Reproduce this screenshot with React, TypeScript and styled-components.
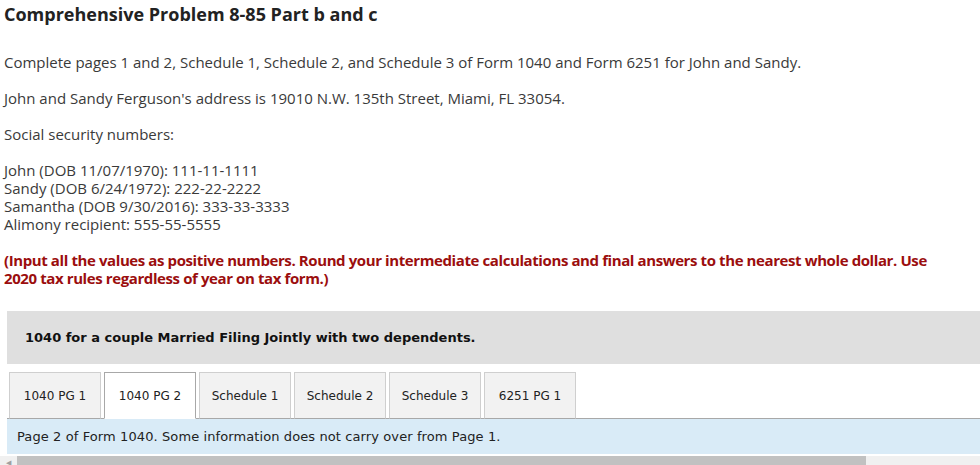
import React, { useState } from 'react';
import styled, { createGlobalStyle } from 'styled-components';

const TABS = ['1040 PG 1', '1040 PG 2', 'Schedule 1', 'Schedule 2', 'Schedule 3', '6251 PG 1'];

const GlobalStyle = createGlobalStyle`
  html, body {
    margin: 0;
    padding: 0;
    background: #fff;
    overflow: hidden;
  }
`;

const Page = styled.div`
  width: 980px;
  height: 465px;
  overflow: hidden;
  font-family: "Open Sans", Lato, sans-serif;
  color: #3a3a3a;
`;

const Title = styled.h2`
  margin: 0;
  padding: 3px 0 0 4px;
  font-size: 18px;
  font-weight: 700;
  line-height: 22px;
  color: #222;
`;

const Body = styled.div`
  padding: 28px 4px 0;
  font-size: 15px;
  line-height: 18px;
`;

const Para = styled.p`
  margin: 0 0 18px;
`;

const Warning = styled.p`
  margin: 0;
  max-width: 950px;
  font-size: 15px;
  font-weight: 700;
  letter-spacing: -0.4px;
  color: #9b0e0e;
`;

const Prompt = styled.div`
  margin: 24px 0 0 7px;
  height: 53px;
  display: flex;
  align-items: center;
  padding-left: 18px;
  background: #dfdfdf;
  font-family: "DejaVu Sans", Verdana, sans-serif;
  font-size: 13px;
  font-weight: 700;
  color: #111;
`;

const TabArea = styled.div`
  margin: 8px 0 0 7px;
`;

const TabRow = styled.div`
  display: flex;
  gap: 3px;
  padding-left: 2px;
  border-bottom: 1px solid #a8a8a8;
`;

const Tab = styled.button<{ $active: boolean }>`
  width: 92px;
  height: 47px;
  padding: 0;
  margin-bottom: -1px;
  border: 1px solid ${(p) => (p.$active ? '#a8a8a8' : '#cfcfcf')};
  border-bottom-color: ${(p) => (p.$active ? '#fff' : '#a8a8a8')};
  background: ${(p) => (p.$active ? '#fff' : '#f2f2f2')};
  font-family: "DejaVu Sans", Verdana, sans-serif;
  font-size: 12px;
  color: #222;
  cursor: pointer;
`;

const Info = styled.div`
  height: 35px;
  display: flex;
  align-items: center;
  padding-left: 10px;
  background: #d9ebf7;
  font-family: "DejaVu Sans", Verdana, sans-serif;
  font-size: 13px;
  letter-spacing: 0.1px;
  color: #222;
`;

const ScrollBar = styled.div`
  display: flex;
  align-items: flex-start;
  height: 12px;
  margin-top: 2px;
  margin-left: -7px;
  background: #f0f0f0;
`;

const Arrow = styled.span`
  width: 17px;
  height: 12px;
  display: flex;
  align-items: center;
  justify-content: center;
  font-size: 7px;
  line-height: 1;
  color: #a0a0a0;
`;

const Thumb = styled.div`
  width: 849px;
  height: 12px;
  background: #c1c1c1;
`;

export default function App() {
  const [active, setActive] = useState(1);

  return (
    <Page>
      <GlobalStyle />
      <Title>Comprehensive Problem 8-85 Part b and c</Title>
      <Body>
        <Para>
          Complete pages 1 and 2, Schedule 1, Schedule 2, and Schedule 3 of Form 1040 and Form 6251 for
          John and Sandy.
        </Para>
        <Para>John and Sandy Ferguson's address is 19010 N.W. 135th Street, Miami, FL 33054.</Para>
        <Para>Social security numbers:</Para>
        <Para>
          John (DOB 11/07/1970): 111-11-1111
          <br />
          Sandy (DOB 6/24/1972): 222-22-2222
          <br />
          Samantha (DOB 9/30/2016): 333-33-3333
          <br />
          Alimony recipient: 555-55-5555
        </Para>
        <Warning>
          (Input all the values as positive numbers. Round your intermediate calculations and final answers to
          the nearest whole dollar. Use 2020 tax rules regardless of year on tax form.)
        </Warning>
      </Body>
      <Prompt>1040 for a couple Married Filing Jointly with two dependents.</Prompt>
      <TabArea>
        <TabRow>
          {TABS.map((t, i) => (
            <Tab key={t} $active={i === active} onClick={() => setActive(i)}>
              {t}
            </Tab>
          ))}
        </TabRow>
        <Info>Page 2 of Form 1040. Some information does not carry over from Page 1.</Info>
        <ScrollBar>
          <Arrow>◀</Arrow>
          <Thumb />
        </ScrollBar>
      </TabArea>
    </Page>
  );
}
